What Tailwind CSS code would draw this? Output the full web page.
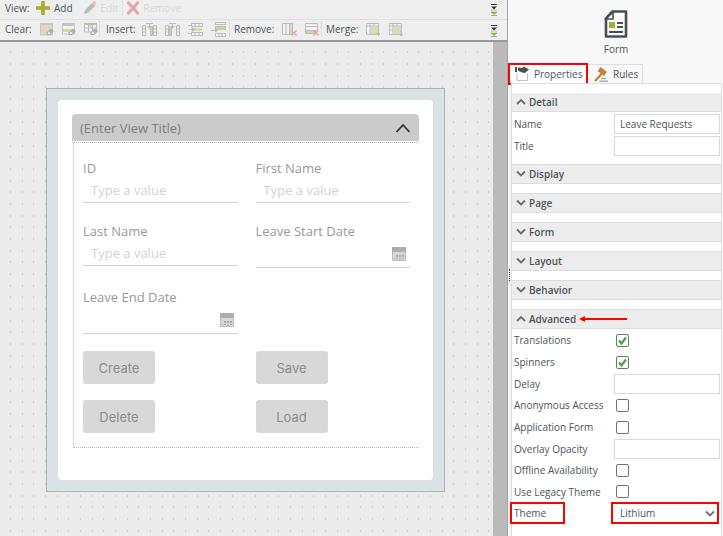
<!DOCTYPE html>
<html lang="en">

<head>
  <meta charset="UTF-8" />
  <meta name="viewport" content="width=device-width, initial-scale=1" />
  <title>Form Designer</title>
  <script src="https://cdn.jsdelivr.net/npm/@tailwindcss/browser@4"></script>
</head>

<body class="flex min-h-screen bg-[#f8f8f8] font-['Open_Sans','Noto_Sans',sans-serif] text-[10px] leading-4 text-[#4d5459]">

  <!-- Shared icons -->
  <svg class="hidden" aria-hidden="true">
    <symbol id="down" viewBox="0 0 10 8"><path d="M1 1.5l4 4 4-4" fill="none" stroke="#687074" stroke-width="1.8" /></symbol>
    <symbol id="up" viewBox="0 0 10 8"><path d="M1 6l4-4 4 4" fill="none" stroke="#687074" stroke-width="1.8" /></symbol>
    <symbol id="eraser" viewBox="0 0 8 8"><path d="M0 5l4-4h2l2 2-4 4H1z" fill="#aeb2b4" /><path d="M1.5 5l1.500-1.500 1.500 1.500-1 1H2z" fill="#f4f4f4" /></symbol>
    <symbol id="cross" viewBox="0 0 6 6"><path d="M.5.5l5 5m0-5l-5 5" stroke="#e3a3a3" stroke-width="1.300" /></symbol>
    <symbol id="more" viewBox="0 0 6 12"><path d="M0 .5h6" stroke="#2d363b" /><path d="M0 2.500h6L3 5.500z" fill="#2d363b" /><path d="M0 6h6M0 8h6L3 10.500z" fill="#86bc25" stroke="#86bc25" stroke-width=".6" /><path d="M0 11.500h6" stroke="#a5a9ab" /></symbol>
    <symbol id="calendar" viewBox="0 0 14 14">
      <path d="M0 0h14v14H0z" fill="#d8d8d8" /><path d="M0 0h14v5H0z" fill="#adadad" />
      <path d="M4 8h2v2H4zm3 0h2v2H7zm3 0h2v2h-2zM2 11h1v1H2zm2 0h2v1H4zm6 0h2v1h-2z" fill="#a6a6a6" /><path d="M7 11h2v2H7z" fill="#86cdf0" />
      <path d="M.5 5v8.500h13V5" fill="none" stroke="#bdbdbd" />
    </symbol>
  </svg>

  <main class="relative flex min-w-0 flex-1 flex-col border-r border-[#a5a5a5] bg-[#ebebeb]">
    <!-- Dotted canvas -->
    <svg class="absolute inset-0 size-full" aria-hidden="true">
      <pattern id="dots" width="35" height="35" patternUnits="userSpaceOnUse">
        <path d="M10 17h1M22 17h1M33 17h1M10 29h1M22 29h1M33 29h1M10 6h1M22 6h1M33 6h1" stroke="#c4c4c4" stroke-width="1.500" />
      </pattern>
      <rect width="100%" height="100%" fill="url(#dots)" />
    </svg>
    <div class="absolute inset-y-0 right-0 w-3.5 bg-[#bababa]"></div>

    <header class="relative border-b-2 border-[#999] bg-[#eeeeee]">
      <div class="flex h-5 items-center border-b border-[#e0e0e0] pr-2.5 pb-1 pl-[5px]">
        <span class="w-[31px]">View:</span>
        <button class="flex items-center gap-1">
          <svg class="size-3.5" viewBox="0 0 14 14"><path d="M7 0v14M0 7h14" stroke="#a8ad2e" stroke-width="3.600" /></svg>Add
        </button>
        <button disabled class="ml-2.5 flex h-4 items-center gap-1 border-r border-[#e0e0e0] pr-1 text-[#d6d6d6]">
          <svg class="size-3.5" viewBox="0 0 14 14"><path d="M1 13l1-4 7-7 3 3-7 7z" fill="#b8bcbe" /><path d="M9 2l1.500-1.500h2L13 2.500 12 5z" fill="#e2c7a6" /></svg>Edit
        </button>
        <button disabled class="ml-[3px] flex items-center gap-[3px] text-[#d6d6d6]">
          <svg class="size-3.5" viewBox="0 0 14 14"><path d="M1.500 1l11 12M12.500 1l-11 12" stroke="#dfa9a9" stroke-width="3" /></svg>Remove
        </button>
        <svg class="mt-1 ml-auto h-3 w-1.5"><use href="#more" /></svg>
      </div>

      <div class="flex h-5 items-center pr-2.5 pb-0.5 pl-[5px]">
        <div class="flex h-4 items-center gap-2 border-r border-[#dcdcdc] pr-px">
          <span class="w-[27px]">Clear:</span>
          <button aria-label="Clear table"><svg class="block size-3.5" viewBox="0 0 14 14"><path d="M.5 1.500h12V13H.5z" fill="#dedcb8" stroke="#c4c7c4" /><path d="M0 1h13v2H0z" fill="#c4c7c4" /><use href="#eraser" x="6" y="6" width="8" height="8" /></svg></button>
          <button aria-label="Clear row"><svg class="block size-3.5" viewBox="0 0 14 14"><path d="M.5 2h12v10H.5z" fill="#f3f3f3" stroke="#c1c4c5" /><path d="M0 1h13v3H0z" fill="#c1c4c5" /><path d="M1 7h9v3H1z" fill="#dad99b" /><use href="#eraser" x="6" y="6" width="8" height="8" /></svg></button>
          <button aria-label="Clear cell"><svg class="block size-3.5" viewBox="0 0 14 14"><path d="M.5 2h12v8H.5zM0 6h13M4.500 2v8M8.500 2v8" fill="#f3f3f3" stroke="#b9bdbe" /><path d="M0 1h13v2H0z" fill="#b9bdbe" /><path d="M5 3h3v3H5z" fill="#dad99b" /><use href="#eraser" x="6" y="6" width="8" height="8" /></svg></button>
        </div>
        <div class="flex h-4 items-center gap-2 border-r border-[#dcdcdc] pr-[3px] pl-1.5">
          <span class="w-7">Insert:</span>
          <button aria-label="Insert column left"><svg class="block size-[15px]" viewBox="0 0 15 15"><path d="M.5 3.500h3v10h-3zM11.500 3.500h3v10h-3zM0 7h4M0 10h4M11 7h4M11 10h4M4 1.500h7M7.500 1v4" fill="#f3f3f3" stroke="#b9bdbe" /><path d="M8.500 4.500h2v9h-2z" fill="#d6d591" stroke="#b9bdbe" /><path d="M5 4h5L7.500 7z" fill="#b9bdbe" /></svg></button>
          <button aria-label="Insert column right"><svg class="block size-[15px]" viewBox="0 0 15 15"><path d="M.5 3.500h3v10h-3zM11.500 3.500h3v10h-3zM0 7h4M0 10h4M11 7h4M11 10h4M4 1.500h7M7.500 1v4" fill="#f3f3f3" stroke="#b9bdbe" /><path d="M4.500 4.500h2v9h-2z" fill="#d6d591" stroke="#b9bdbe" /><path d="M5 4h5L7.500 7z" fill="#b9bdbe" /></svg></button>
          <button aria-label="Insert row above"><svg class="block size-[15px]" viewBox="0 0 15 15"><path d="M3.500 1.500h11v3h-11zM3.500 10.500h11v3h-11zM7 1v4M11 1v4M7 10v4M11 10v4M0 3.500h4M0 11.500h4" fill="#f3f3f3" stroke="#b9bdbe" /><path d="M6 6.500h8v2H6z" fill="#d6d591" /><path d="M1 7.500h3M4 5.500l3 2-3 2z" fill="#b9bdbe" stroke="#b9bdbe" stroke-width=".8" /></svg></button>
          <button aria-label="Insert row below"><svg class="block size-[15px]" viewBox="0 0 15 15"><path d="M4.500 .5h10v2h-10zM4.500 11.500h10v3h-10zM8 11v4M11 11v4M0 8.500h5" fill="#f3f3f3" stroke="#b9bdbe" /><path d="M4.500 4.500h10v3h-10z" fill="#d6d591" stroke="#b9bdbe" /><path d="M4 6.500l3 2-3 2z" fill="#b9bdbe" /></svg></button>
        </div>
        <div class="flex h-4 items-center gap-2 border-r border-[#dcdcdc] pr-px pl-1">
          <span class="w-10">Remove:</span>
          <button aria-label="Remove column"><svg class="block size-[15px]" viewBox="0 0 15 15"><path d="M.5 1.500h10v11H.5zM4 1v12" fill="#f3f3f3" stroke="#b9bdbe" /><path d="M7.500 1.500h3v11h-3z" fill="#dddbb0" stroke="#b9bdbe" /><use href="#cross" x="9" y="8" width="6" height="6" /></svg></button>
          <button aria-label="Remove row"><svg class="block size-[15px]" viewBox="0 0 15 15"><path d="M.5 1.500h12v3H.5zM.5 4.500h12v4H.5z" fill="#f3f3f3" stroke="#b9bdbe" /><path d="M.5 8.500h10v3H.5z" fill="#d6d591" stroke="#b9bdbe" /><use href="#cross" x="8" y="8" width="6" height="6" /></svg></button>
        </div>
        <div class="flex h-4 items-center gap-2 pl-1">
          <span class="w-8">Merge:</span>
          <button aria-label="Merge right"><svg class="block size-[15px]" viewBox="0 0 15 15"><path d="M.5 1.500h12v11H.5zM0 4h13M4 1v12M8 1v3" fill="#f3f3f3" stroke="#b9bdbe" /><path d="M5 5h7v7H5z" fill="#dddbb0" /><path d="M9 12h5m-2-2l2 2-2 2" stroke="#b9bdbe" fill="none" /></svg></button>
          <button aria-label="Merge down"><svg class="block size-[15px]" viewBox="0 0 15 15"><path d="M.5 1.500h12v11H.5zM0 4h13M4 1v12M8 1v3M0 8h4" fill="#f3f3f3" stroke="#b9bdbe" /><path d="M5 5h7v7H5z" fill="#dddbb0" /><path d="M12 9v5m-2-2l2 2 2-2" stroke="#b9bdbe" fill="none" /></svg></button>
        </div>
        <svg class="mt-1 ml-auto h-3 w-1.5"><use href="#more" /></svg>
      </div>
    </header>

    <!-- Form canvas -->
    <div class="relative mt-[46px] mr-[62px] mb-10 ml-[46px] border border-[#a9b3b7] bg-[#dbe2e5] p-[11px] text-[13px] leading-5 text-[#999]">
      <section class="rounded-sm bg-white px-3.5 pt-3.5 pb-8">
        <h1 class="flex h-[27px] items-center justify-between rounded-t-sm bg-[#cbcbcb] px-2 text-[#808080]">
          (Enter View Title)
          <button aria-label="Collapse view" class="text-[#333]"><svg class="h-3 w-4" viewBox="0 0 16 12"><path d="M1.500 10L8 3l6.500 7" fill="none" stroke="currentColor" stroke-width="1.800" /></svg></button>
        </h1>
        <form class="mt-px ml-px grid grid-cols-2 gap-x-[18px] border-y border-l border-dotted border-[#bbb] pt-[15px] pr-[9px] pb-3.5 pl-[9px]">
          <div class="h-[63px]">
            <label for="id" class="block">ID</label>
            <input id="id" placeholder="Type a value" class="block h-[25px] w-full border-b border-[#d2d2d2] px-2 placeholder:text-[#d2d2d2]" />
          </div>
          <div class="h-[63px]">
            <label for="first" class="block">First Name</label>
            <input id="first" placeholder="Type a value" class="block h-[25px] w-full border-b border-[#d2d2d2] px-2 placeholder:text-[#d2d2d2]" />
          </div>
          <div class="h-[66px]">
            <label for="last" class="block">Last Name</label>
            <input id="last" placeholder="Type a value" class="block h-[25px] w-full border-b border-[#d2d2d2] px-2 placeholder:text-[#d2d2d2]" />
          </div>
          <div class="h-[66px]">
            <label for="start" class="block">Leave Start Date</label>
            <div class="flex h-[27px] items-center border-b border-[#d2d2d2] pr-1">
              <input id="start" class="min-w-0 flex-1" />
              <button type="button" aria-label="Pick start date"><svg class="block size-3.5"><use href="#calendar" /></svg></button>
            </div>
          </div>
          <div class="col-start-1 h-16">
            <label for="end" class="block">Leave End Date</label>
            <div class="flex h-[27px] items-center border-b border-[#d2d2d2] pr-1">
              <input id="end" class="min-w-0 flex-1" />
              <button type="button" aria-label="Pick end date"><svg class="block size-3.5"><use href="#calendar" /></svg></button>
            </div>
          </div>
          <div class="col-span-2 grid grid-cols-2 gap-x-[18px] gap-y-4 font-[Inter,'Open_Sans',sans-serif] text-[#8c8c8c]">
            <button type="button" class="h-[33px] w-[72px] rounded-[3px] bg-[#d8d8d8]">Create</button>
            <button type="button" class="h-[33px] w-[72px] rounded-[3px] bg-[#d8d8d8]">Save</button>
            <button type="button" class="h-[33px] w-[72px] rounded-[3px] bg-[#d8d8d8]">Delete</button>
            <button type="button" class="h-[33px] w-[72px] rounded-[3px] bg-[#d8d8d8]">Load</button>
          </div>
        </form>
      </section>
    </div>
  </main>

  <!-- Properties pane -->
  <aside class="relative flex w-[215px] shrink-0 flex-col">
    <div class="absolute top-[269px] left-px h-3 border-l border-dotted border-[#333]"></div>
    <div class="flex h-[63px] flex-col items-center gap-[3px] pt-2.5 pl-px">
      <svg class="h-7 w-6" viewBox="0 0 24 28">
        <path d="M8.500 1.500H22V26.500H2V8.500z" fill="#fff" stroke="#454f54" stroke-width="2.600" stroke-linejoin="round" />
        <path d="M9 2v7H2z" fill="#fff" stroke="#454f54" stroke-width="1.600" />
        <path d="M5 12h6v6H5z" fill="#a8ad2e" /><path d="M13 13h6M13 17h6M5 22h14" stroke="#454f54" stroke-width="2" />
      </svg>
      <span>Form</span>
    </div>
    <nav class="flex h-5">
      <button class="flex h-[22px] w-20 items-center gap-1 border-2 border-[#f00] bg-white pl-1">
        <svg class="h-4 w-4" viewBox="0 0 16 16"><path d="M3 7v7.500h10.500V7" fill="#fff" stroke="#bfc2c3" /><path d="M1 1h2v5H1zM4 1.500l4 .5 2-1.500 5 3-4 3.500-3-.5L4 4.500z" fill="#454f54" /></svg>
        Properties
      </button>
      <button class="mt-px flex h-5 w-[55px] items-center gap-1 border-t border-r border-[#dedede] pb-px pl-1.5">
        <svg class="size-[15px]" viewBox="0 0 14 14"><path d="M6 0l6 4.500-2.500 4-6-4.500zM6 6l2 1-6 6.500-2-1z" fill="#c77f35" /><path d="M7 10h4v1.500H7zM5 12.500h8V14H5z" fill="#a9adaf" /></svg>
        Rules
      </button>
    </nav>
    <div class="mr-px ml-[3px] flex-1 border-x border-t border-[#dedede] bg-white pt-[9px]">
      <h2><button class="flex h-[19px] w-full items-center gap-[3px] border-b border-[#dddddd] bg-[#ececec] pl-1 font-semibold"><svg class="h-2 w-2.5"><use href="#up" /></svg>Detail</button></h2>
      <div class="flex h-[22px] items-center pt-px pr-px pl-0.5">
        <label for="name" class="flex-1">Name</label><input id="name" value="Leave Requests" class="h-5 w-[106px] border border-[#d9d9d9] px-[5px]" />
      </div>
      <div class="flex h-[22px] items-center pt-px pr-px pl-0.5">
        <label for="title" class="flex-1">Title</label><input id="title" class="h-5 w-[106px] border border-[#d9d9d9] px-[5px]" />
      </div>
      <div class="mt-2 space-y-[9px]">
        <h2><button class="flex h-5 w-full items-center gap-[3px] border-y border-[#dddddd] bg-[#ececec] pl-1 font-semibold"><svg class="h-2 w-2.5"><use href="#down" /></svg>Display</button></h2>
        <h2><button class="flex h-5 w-full items-center gap-[3px] border-y border-[#dddddd] bg-[#ececec] pl-1 font-semibold"><svg class="h-2 w-2.5"><use href="#down" /></svg>Page</button></h2>
        <h2><button class="flex h-5 w-full items-center gap-[3px] border-y border-[#dddddd] bg-[#ececec] pl-1 font-semibold"><svg class="h-2 w-2.5"><use href="#down" /></svg>Form</button></h2>
        <h2><button class="flex h-5 w-full items-center gap-[3px] border-y border-[#dddddd] bg-[#ececec] pl-1 font-semibold"><svg class="h-2 w-2.5"><use href="#down" /></svg>Layout</button></h2>
        <h2><button class="flex h-5 w-full items-center gap-[3px] border-y border-[#dddddd] bg-[#ececec] pl-1 font-semibold"><svg class="h-2 w-2.5"><use href="#down" /></svg>Behavior</button></h2>
        <h2><button class="flex h-5 w-full items-center gap-[3px] border-y border-[#dddddd] bg-[#ececec] pl-1 font-semibold"><svg class="h-2 w-2.5"><use href="#up" /></svg>Advanced
          <svg class="h-2 w-12" viewBox="0 0 48 8"><path d="M4 4h44" stroke="#f00" stroke-width="2" /><path d="M0 4l6-3v6z" fill="#f00" /></svg></button></h2>
      </div>
      <div class="pr-px pl-0.5">
        <div class="flex h-[22px] items-center">
          <label for="translations" class="flex-1">Translations</label>
          <span class="grid w-[106px] pl-0.5"><input id="translations" type="checkbox" checked class="peer col-start-1 row-start-1 size-[13px] appearance-none rounded-[2px] border border-[#6d7478] bg-white" /><svg class="pointer-events-none invisible col-start-1 row-start-1 size-[13px] peer-checked:visible" viewBox="0 0 13 13"><path d="M3 6.500l2.500 3 4.500-6" fill="none" stroke="#3fa648" stroke-width="2.200" /></svg></span>
        </div>
        <div class="flex h-[22px] items-center">
          <label for="spinners" class="flex-1">Spinners</label>
          <span class="grid w-[106px] pl-0.5"><input id="spinners" type="checkbox" checked class="peer col-start-1 row-start-1 size-[13px] appearance-none rounded-[2px] border border-[#6d7478] bg-white" /><svg class="pointer-events-none invisible col-start-1 row-start-1 size-[13px] peer-checked:visible" viewBox="0 0 13 13"><path d="M3 6.500l2.500 3 4.500-6" fill="none" stroke="#3fa648" stroke-width="2.200" /></svg></span>
        </div>
        <div class="flex h-[21px] items-center">
          <label for="delay" class="flex-1">Delay</label><input id="delay" class="h-5 w-[106px] border border-[#d9d9d9] px-[5px]" />
        </div>
        <div class="flex h-[22px] items-center">
          <label for="anonymous" class="flex-1">Anonymous Access</label>
          <span class="grid w-[106px] pl-0.5"><input id="anonymous" type="checkbox" class="size-[13px] appearance-none rounded-[2px] border border-[#6d7478] bg-white" /></span>
        </div>
        <div class="flex h-[22px] items-center">
          <label for="application" class="flex-1">Application Form</label>
          <span class="grid w-[106px] pl-0.5"><input id="application" type="checkbox" class="size-[13px] appearance-none rounded-[2px] border border-[#6d7478] bg-white" /></span>
        </div>
        <div class="flex h-[21px] items-center">
          <label for="overlay" class="flex-1">Overlay Opacity</label><input id="overlay" class="h-5 w-[106px] border border-[#d9d9d9] px-[5px]" />
        </div>
        <div class="flex h-[22px] items-center">
          <label for="offline" class="flex-1">Offline Availability</label>
          <span class="grid w-[106px] pl-0.5"><input id="offline" type="checkbox" class="size-[13px] appearance-none rounded-[2px] border border-[#6d7478] bg-white" /></span>
        </div>
        <div class="flex h-[21px] items-center">
          <label for="legacy" class="flex-1">Use Legacy Theme</label>
          <span class="grid w-[106px] pl-0.5"><input id="legacy" type="checkbox" class="size-[13px] appearance-none rounded-[2px] border border-[#6d7478] bg-white" /></span>
        </div>
      </div>
      <div class="-ml-0.5 flex h-[22px] items-center justify-between pr-0.5">
        <label for="theme" class="flex h-[22px] w-[55px] items-center border-2 border-[#f00] pl-0.5">Theme</label>
        <div class="relative w-[108px]">
          <select id="theme" class="block h-[22px] w-full appearance-none border-2 border-[#f00] bg-white px-[7px]">
            <option>Lithium</option>
          </select>
          <svg class="pointer-events-none absolute top-2 right-1 h-2 w-2.5"><use href="#down" /></svg>
        </div>
      </div>
    </div>
  </aside>

</body>

</html>
